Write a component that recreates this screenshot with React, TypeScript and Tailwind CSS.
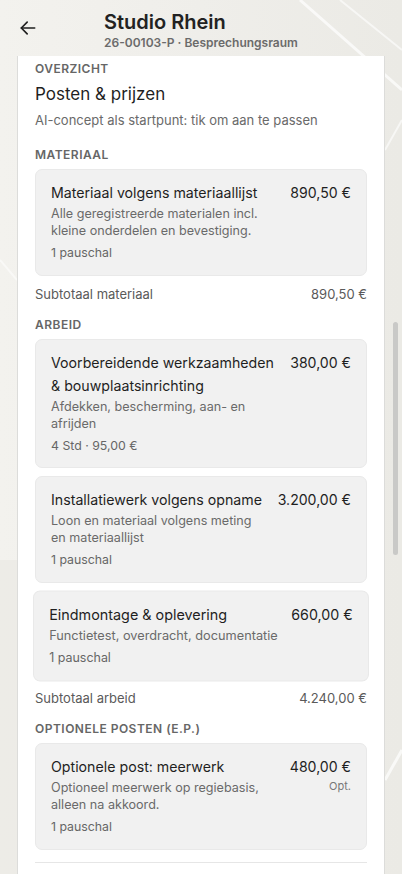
import React from "react";

type Item = {
  title: string;
  desc: string;
  meta: string;
  price: string;
  opt?: boolean;
  active?: boolean;
  nowrap?: boolean;
};

const font = { fontFamily: "Inter, 'Noto Sans', sans-serif" };

function Card({ it }: { it: Item }) {
  return (
    <div
      className={
        "rounded-[7px] border border-[#e9e9e9] bg-[#f1f1f1] px-[15px] pt-[11px] pb-[13.5px] " +
        (it.active ? "scale-[1.012]" : "")
      }
    >
      <div className="flex gap-3">
        <div className="min-w-0 flex-1">
          <div className="text-[14.2px] leading-[23px] text-[#1f1f1f]">{it.title}</div>
          <div
            className={
              "mt-[1px] text-[12.6px] leading-[17px] text-[#6a6a6a] " + (it.nowrap ? "whitespace-nowrap" : "")
            }
          >
            {it.desc}
          </div>
          <div className="mt-[6px] text-[12.3px] leading-[16px] text-[#666]">{it.meta}</div>
        </div>
        <div className="shrink-0 text-right">
          <div className="text-[14.1px] leading-[23px] text-[#1f1f1f]">{it.price}</div>
          {it.opt && <div className="text-[11px] leading-[16px] text-[#777]">Opt.</div>}
        </div>
      </div>
    </div>
  );
}

function Label({ children }: { children: React.ReactNode }) {
  return (
    <div className="text-[12px] font-semibold uppercase leading-[16px] tracking-[0.04em] text-[#666]">
      {children}
    </div>
  );
}

function Subtotal({ label, value }: { label: string; value: string }) {
  return (
    <div className="flex justify-between text-[13px] leading-[18px] text-[#5a5a5a]">
      <span>{label}</span>
      <span>{value}</span>
    </div>
  );
}

export default function App() {
  const materiaal: Item[] = [
    {
      title: "Materiaal volgens materiaallijst",
      desc: "Alle geregistreerde materialen incl. kleine onderdelen en bevestiging.",
      meta: "1 pauschal",
      price: "890,50 €",
    },
  ];
  const arbeid: Item[] = [
    {
      title: "Voorbereidende werkzaamheden & bouwplaatsinrichting",
      desc: "Afdekken, bescherming, aan- en afrijden",
      meta: "4 Std · 95,00 €",
      price: "380,00 €",
    },
    {
      title: "Installatiewerk volgens opname",
      desc: "Loon en materiaal volgens meting en materiaallijst",
      meta: "1 pauschal",
      price: "3.200,00 €",
    },
    {
      title: "Eindmontage & oplevering",
      desc: "Functietest, overdracht, documentatie",
      meta: "1 pauschal",
      price: "660,00 €",
      active: true,
      nowrap: true,
    },
  ];
  const optioneel: Item[] = [
    {
      title: "Optionele post: meerwerk",
      desc: "Optioneel meerwerk op regiebasis, alleen na akkoord.",
      meta: "1 pauschal",
      price: "480,00 €",
      opt: true,
    },
  ];

  return (
    <div
      className="relative h-[874px] w-[402px] overflow-hidden bg-gradient-to-r from-[#f3f2ee] via-[#efeeea] to-[#ebeae5]"
      style={font}
    >
      <svg className="pointer-events-none absolute inset-0" width="402" height="874" viewBox="0 0 402 874">
        <path d="M300 0 L402 90" stroke="#ffffff" strokeWidth="3" opacity="0.7" fill="none" />
        <path d="M340 0 L402 50" stroke="#ffffff" strokeWidth="2" opacity="0.6" fill="none" />
        <path d="M385 150 L402 120" stroke="#ffffff" strokeWidth="2" opacity="0.6" fill="none" />
        <path d="M385 780 L402 750" stroke="#ffffff" strokeWidth="3" opacity="0.7" fill="none" />
        <path d="M0 260 L17 280" stroke="#ffffff" strokeWidth="2" opacity="0.5" fill="none" />
        <rect x="0" y="560" width="17" height="314" fill="#e9e8e3" opacity="0.6" />
      </svg>

      {/* Header */}
      <div className="relative flex h-[56px] items-start">
        <div className="flex w-[104px] shrink-0 items-center pl-[18px] pt-[18px]">
          <svg width="20" height="20" viewBox="0 0 24 24" fill="none" stroke="#1f1f1f" strokeWidth="2" strokeLinecap="round" strokeLinejoin="round">
            <path d="M20 12H4" />
            <path d="M11 5l-7 7 7 7" />
          </svg>
        </div>
        <div className="pt-[9px]">
          <div className="text-[20px] font-semibold leading-[26px] text-[#222]">Studio Rhein</div>
          <div className="text-[12px] font-semibold leading-[16px] text-[#6b6b6b]">
            26-00103-P · Besprechungsraum
          </div>
        </div>
      </div>

      {/* Panel */}
      <div className="relative mx-[17px] h-[818px] border-x border-[#dcdcda] bg-white px-[17px] pt-[5px]">
        <Label>Overzicht</Label>
        <div className="mt-[5px] text-[17px] leading-[24px] text-[#1f1f1f]">Posten &amp; prijzen</div>
        <div className="mt-[5px] text-[13px] leading-[18px] text-[#6a6a6a]">
          AI-concept als startpunt: tik om aan te passen
        </div>

        <div className="mt-[18px]">
          <Label>Materiaal</Label>
        </div>
        <div className="mt-[6px] flex flex-col gap-2">
          {materiaal.map((it) => (
            <Card key={it.title} it={it} />
          ))}
        </div>
        <div className="mt-[9px]">
          <Subtotal label="Subtotaal materiaal" value="890,50 €" />
        </div>

        <div className="mt-[14px]">
          <Label>Arbeid</Label>
        </div>
        <div className="mt-[6px] flex flex-col gap-2">
          {arbeid.map((it) => (
            <Card key={it.title} it={it} />
          ))}
        </div>
        <div className="mt-[9px]">
          <Subtotal label="Subtotaal arbeid" value="4.240,00 €" />
        </div>

        <div className="mt-[14px]">
          <Label>Optionele posten (E.P.)</Label>
        </div>
        <div className="mt-[6px] flex flex-col gap-2">
          {optioneel.map((it) => (
            <Card key={it.title} it={it} />
          ))}
        </div>
        <div className="mt-[12px] border-t border-[#e6e6e6]" />
      </div>

      {/* Scrollbar */}
      <div className="absolute left-[393px] top-[322px] h-[233px] w-[5px] rounded-full bg-[#c9c9c7]" />
    </div>
  );
}
